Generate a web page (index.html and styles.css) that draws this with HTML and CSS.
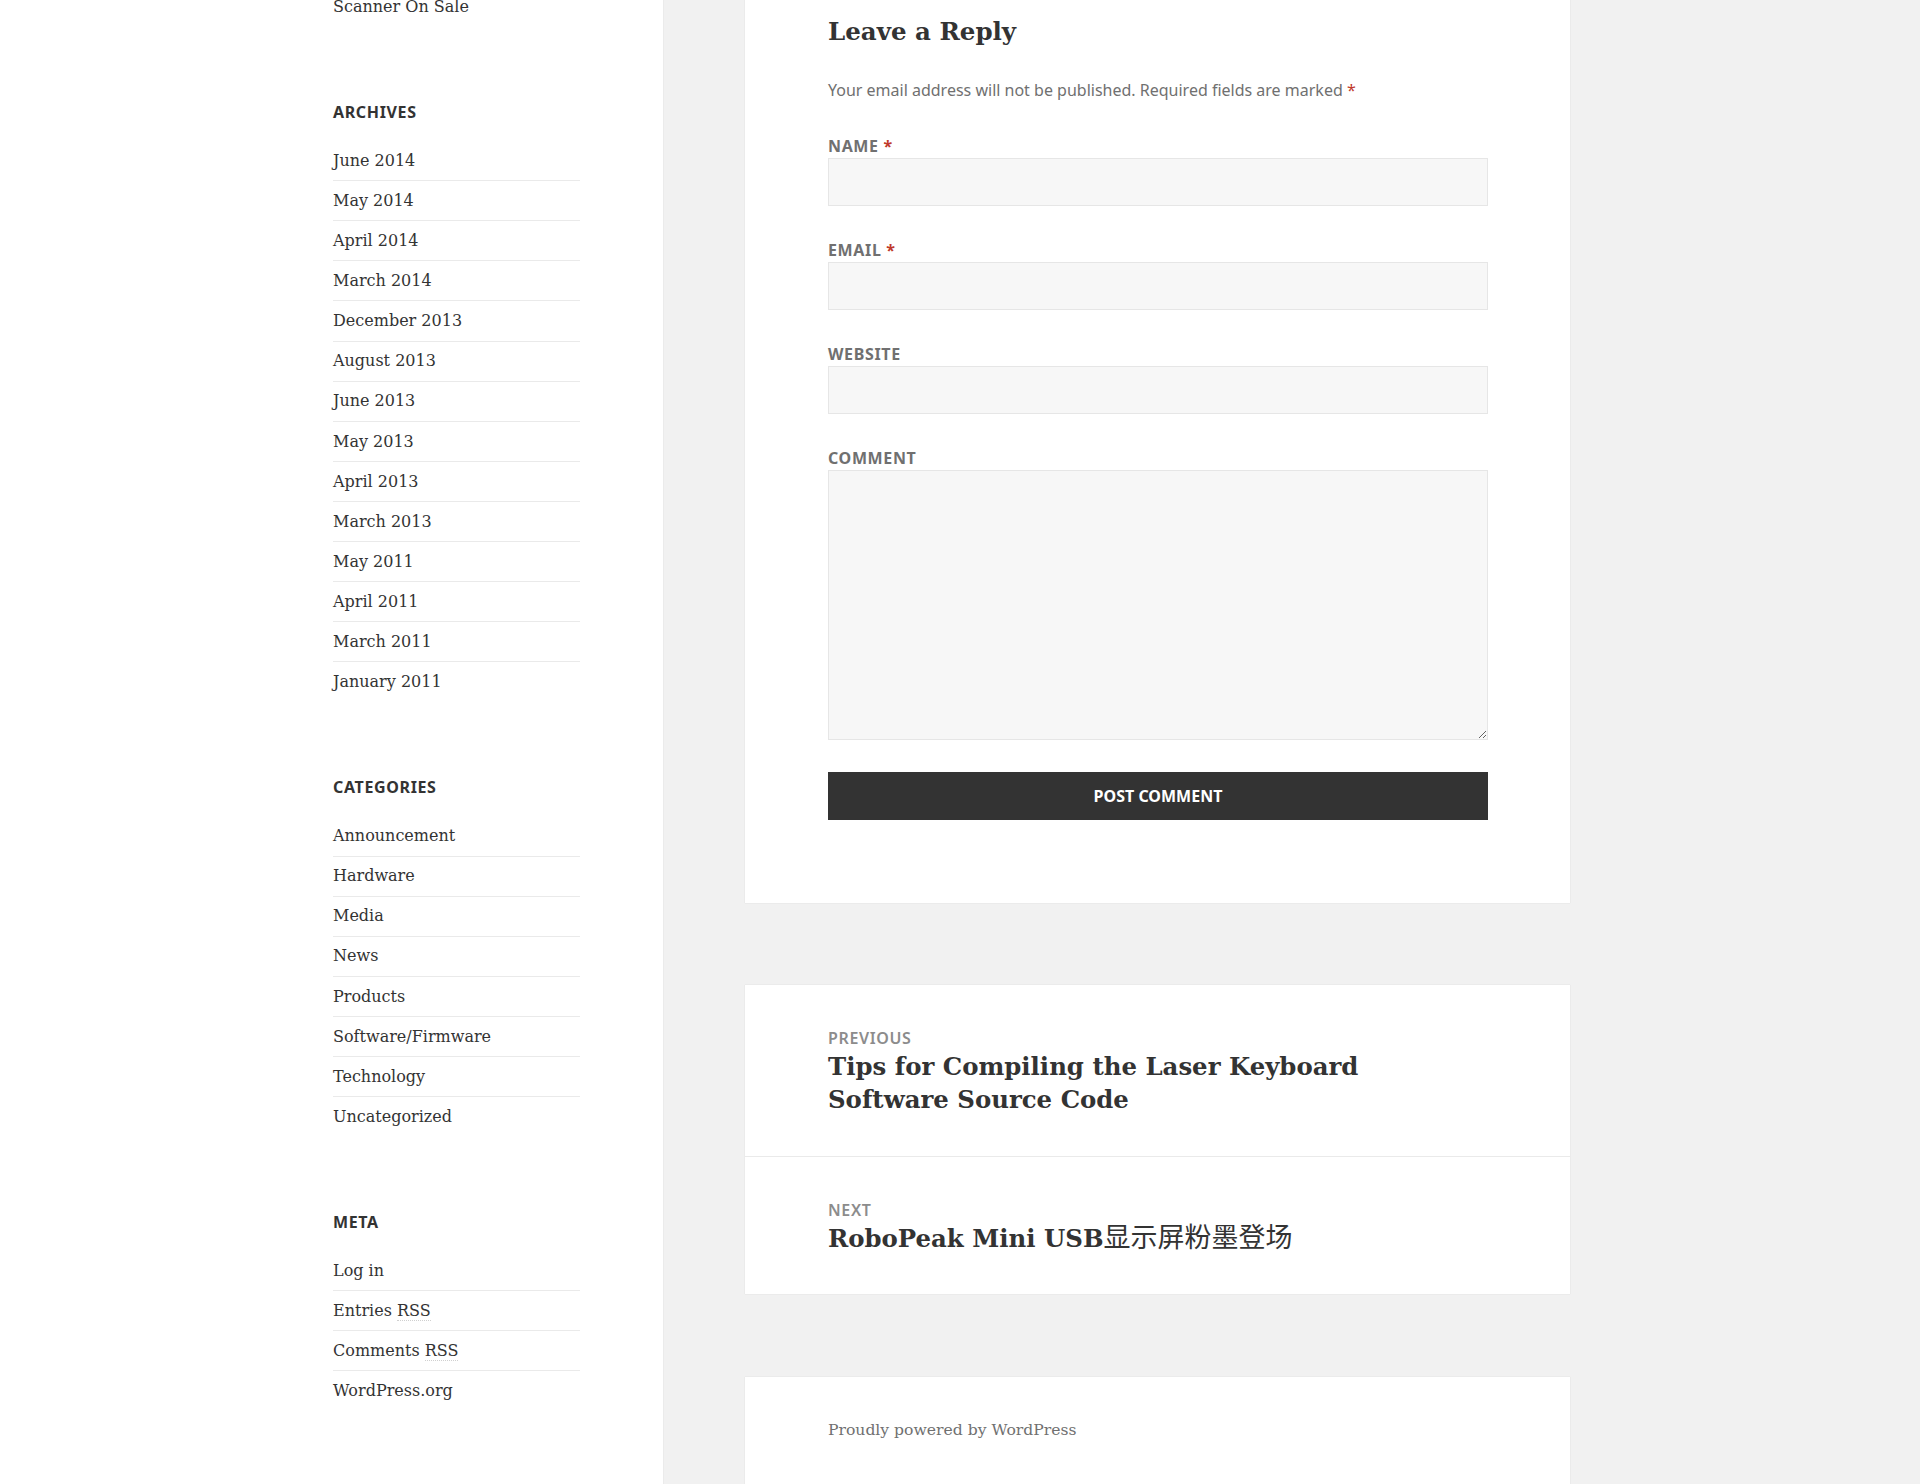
FILE: index.html
```html
<!DOCTYPE html>
<html lang="en">
<head>
<meta charset="utf-8">
<title>Leave a Reply</title>
<link rel="stylesheet" href="styles.css">
</head>
<body>
<div class="site">
  <aside class="sidebar">
    <div class="sidebar-inner">
      <section class="widget">
        <ul class="widget-list">
          <li class="cut"><a href="#">Scanner On Sale</a></li>
        </ul>
      </section>
      <section class="widget">
        <h2 class="widget-title">Archives</h2>
        <ul class="widget-list">
          <li><a href="#">June 2014</a></li>
          <li><a href="#">May 2014</a></li>
          <li><a href="#">April 2014</a></li>
          <li><a href="#">March 2014</a></li>
          <li><a href="#">December 2013</a></li>
          <li><a href="#">August 2013</a></li>
          <li><a href="#">June 2013</a></li>
          <li><a href="#">May 2013</a></li>
          <li><a href="#">April 2013</a></li>
          <li><a href="#">March 2013</a></li>
          <li><a href="#">May 2011</a></li>
          <li><a href="#">April 2011</a></li>
          <li><a href="#">March 2011</a></li>
          <li><a href="#">January 2011</a></li>
        </ul>
      </section>
      <section class="widget">
        <h2 class="widget-title">Categories</h2>
        <ul class="widget-list">
          <li><a href="#">Announcement</a></li>
          <li><a href="#">Hardware</a></li>
          <li><a href="#">Media</a></li>
          <li><a href="#">News</a></li>
          <li><a href="#">Products</a></li>
          <li><a href="#">Software/Firmware</a></li>
          <li><a href="#">Technology</a></li>
          <li><a href="#">Uncategorized</a></li>
        </ul>
      </section>
      <section class="widget">
        <h2 class="widget-title">Meta</h2>
        <ul class="widget-list">
          <li><a href="#">Log in</a></li>
          <li><a href="#">Entries <abbr title="Really Simple Syndication">RSS</abbr></a></li>
          <li><a href="#">Comments <abbr title="Really Simple Syndication">RSS</abbr></a></li>
          <li><a href="#">WordPress.org</a></li>
        </ul>
      </section>
    </div>
  </aside>

  <main class="main">
    <div class="card comments">
      <h3 class="reply-title">Leave a Reply</h3>
      <form class="comment-form" action="#">
        <p class="comment-notes">Your email address will not be published. Required fields are marked <span class="required">*</span></p>
        <p class="field">
          <label for="author">Name <span class="required">*</span></label>
          <input id="author" type="text">
        </p>
        <p class="field">
          <label for="email">Email <span class="required">*</span></label>
          <input id="email" type="email">
        </p>
        <p class="field">
          <label for="url">Website</label>
          <input id="url" type="url">
        </p>
        <p class="field">
          <label for="comment">Comment</label>
          <textarea id="comment"></textarea>
        </p>
        <p class="form-submit">
          <button type="button" class="submit">Post Comment</button>
        </p>
      </form>
    </div>

    <nav class="card post-nav">
      <a class="nav-item" href="#">
        <span class="meta-nav">Previous</span>
        <span class="post-title">Tips for Compiling the Laser Keyboard Software Source Code</span>
      </a>
      <a class="nav-item nav-next" href="#">
        <span class="meta-nav">Next</span>
        <span class="post-title">RoboPeak Mini USB<span class="cjk">显示屏粉墨登场</span></span>
      </a>
    </nav>

    <footer class="card site-footer">
      <a class="credit" href="#">Proudly powered by WordPress</a>
    </footer>
  </main>
</div>
</body>
</html>
```

FILE: styles.css
```css
html, body {
  margin: 0;
  padding: 0;
}

body {
  background: #f1f1f1;
  color: #333333;
  font-family: "DejaVu Serif", "Noto Sans CJK SC", serif;
  font-size: 16px;
  line-height: 24px;
  overflow: hidden;
}

a {
  color: #333333;
  text-decoration: none;
}

.site {
  display: flex;
  align-items: stretch;
  min-height: 1484px;
}

/* ---------- Sidebar ---------- */
.sidebar {
  flex: 0 0 663px;
  width: 663px;
  background: #ffffff;
  box-shadow: 0 0 1px rgba(0, 0, 0, 0.15);
  box-sizing: border-box;
  padding-left: 333px;
}

.sidebar-inner {
  width: 247px;
  margin-top: -13px;
}

.widget {
  margin-bottom: 74px;
}

.widget-title {
  margin: 0 0 17px;
  font-family: "Noto Sans", sans-serif;
  font-size: 16px;
  font-weight: 700;
  line-height: 24px;
  letter-spacing: 0.04em;
  text-transform: uppercase;
  color: #333333;
}

.widget-list {
  list-style: none;
  margin: 0;
  padding: 0;
}

.widget-list li {
  border-top: 1px solid #eaeaea;
  padding: 7.8px 0 7.3px;
  font-size: 16px;
  line-height: 24px;
}

.widget-list li:first-child {
  border-top: 0;
}

.widget-list abbr {
  text-decoration: none;
  border-bottom: 1px dotted #d0d0d0;
}

/* ---------- Main column ---------- */
.main {
  margin-left: 82px;
  width: 825px;
  flex: 0 0 825px;
}

.card {
  background: #ffffff;
  box-shadow: 0 0 1px rgba(0, 0, 0, 0.15);
}

.comments {
  padding: 1px 82px 83px 83px;
}

.reply-title {
  margin: 14px 0 29px;
  font-size: 24.5px;
  font-weight: 700;
  line-height: 34px;
  color: #333333;
}

.comment-form p {
  margin: 0 0 32px;
}

.comment-form .comment-notes {
  margin-bottom: 32px;
  font-family: "Noto Sans", sans-serif;
  font-size: 16px;
  line-height: 24px;
  color: #707070;
}

.required {
  color: #c0392b;
}

.field label {
  display: block;
  font-family: "Noto Sans", sans-serif;
  font-size: 16px;
  font-weight: 700;
  line-height: 24px;
  letter-spacing: 0.04em;
  text-transform: uppercase;
  color: #707070;
}

.field input,
.field textarea {
  display: block;
  width: 100%;
  box-sizing: border-box;
  margin: 0;
  background: #f7f7f7;
  border: 1px solid #e6e6e6;
  border-radius: 0;
  font-family: "Noto Sans", sans-serif;
  font-size: 16px;
  color: #333333;
  padding: 8px 12px;
}

.field input {
  height: 48px;
}

.field textarea {
  height: 270px;
  resize: vertical;
}

.comment-form .form-submit {
  margin: 0;
}

.submit {
  display: block;
  width: 100%;
  height: 48px;
  margin: 0;
  border: 0;
  border-radius: 0;
  background: #333333;
  color: #ffffff;
  font-family: "Noto Sans", sans-serif;
  font-size: 16px;
  font-weight: 700;
  letter-spacing: 0;
  text-transform: uppercase;
  cursor: pointer;
}

/* ---------- Post navigation ---------- */
.post-nav {
  margin-top: 82px;
  display: flex;
  flex-direction: column;
}

.nav-item {
  display: block;
  padding: 41px 82px 40px 83px;
}

.nav-next {
  border-top: 1px solid #eaeaea;
  padding-bottom: 39px;
}

.meta-nav {
  display: block;
  font-family: "Noto Sans", sans-serif;
  font-size: 16px;
  font-weight: 600;
  line-height: 24px;
  letter-spacing: 0.04em;
  text-transform: uppercase;
  color: #8c8c8c;
}

.post-title {
  display: block;
  max-width: 560px;
  font-size: 24.4px;
  font-weight: 700;
  line-height: 33px;
  color: #333333;
}

.cjk {
  font-family: "Noto Sans CJK SC", sans-serif;
  font-size: 27px;
  font-weight: 400;
  line-height: 1;
}

/* ---------- Footer ---------- */
.site-footer {
  margin-top: 83px;
  padding: 41px 82px 80px 83px;
}

.credit {
  font-size: 15.6px;
  line-height: 24px;
  color: #707070;
}
```
